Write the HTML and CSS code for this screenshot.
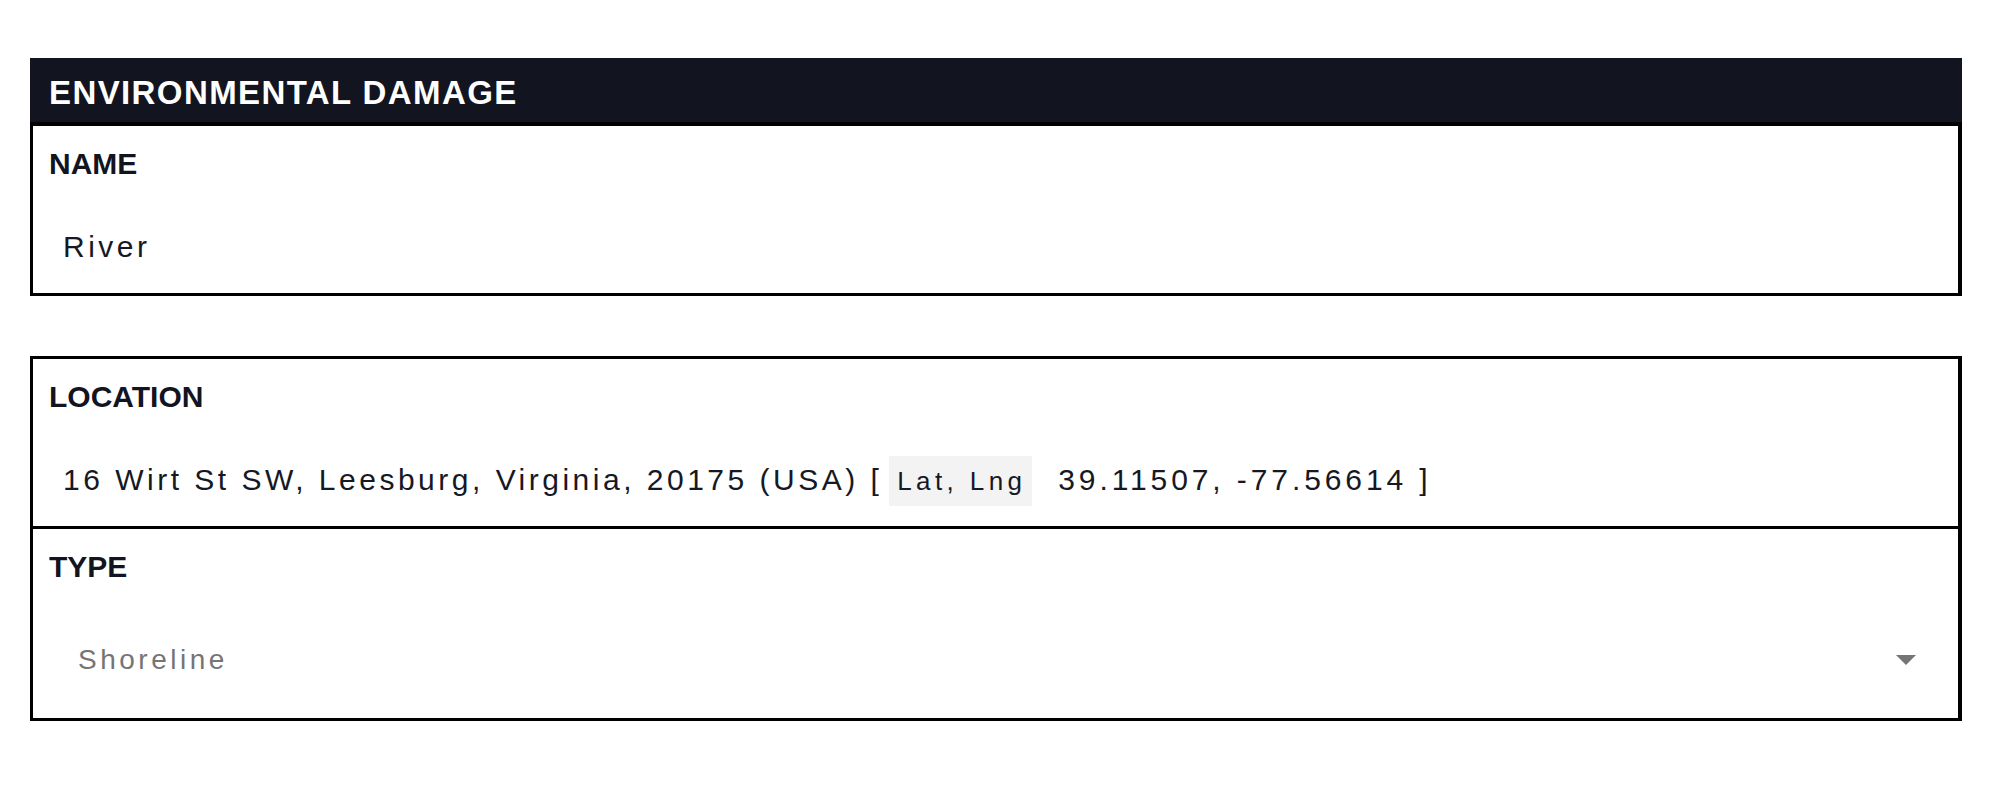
FILE: index.html
```html
<!DOCTYPE html>
<html lang="en">
<head>
<meta charset="utf-8">
<title>Environmental Damage</title>
<link rel="stylesheet" href="styles.css">
</head>
<body>
<main class="page">
  <section class="card">
    <header class="card-head">ENVIRONMENTAL DAMAGE</header>
    <div class="card-body card-body-first">
      <div class="field">
        <div class="label">NAME</div>
        <div class="value">River</div>
      </div>
    </div>
  </section>

  <section class="card">
    <div class="card-body">
      <div class="field">
        <div class="label">LOCATION</div>
        <div class="value">16 Wirt St SW, Leesburg, Virginia, 20175 (USA) [ <span class="chip">Lat, Lng</span> <span class="coords">39.11507, -77.56614 ]</span></div>
      </div>
      <div class="field field-divided">
        <div class="label">TYPE</div>
        <div class="select">
          <span class="select-text">Shoreline</span>
          <span class="select-arrow"></span>
        </div>
      </div>
    </div>
  </section>
</main>
</body>
</html>
```

FILE: styles.css
```css
html, body {
  margin: 0;
  padding: 0;
  background: #ffffff;
}

body {
  font-family: "Liberation Sans", Arial, Helvetica, sans-serif;
  color: #12141f;
}

.page {
  width: 1932px;
  padding: 58px 0 0 30px;
  display: flex;
  flex-direction: column;
  gap: 60px;
}

.card {
  display: flex;
  flex-direction: column;
}

.card-head {
  background: #12141f;
  color: #ffffff;
  height: 64px;
  box-sizing: border-box;
  padding: 6px 0 0 19px;
  font-size: 33px;
  font-weight: 700;
  letter-spacing: 1.4px;
  line-height: 58px;
  white-space: nowrap;
  overflow: hidden;
}

.card-body {
  border-style: solid;
  border-color: #000000;
  border-width: 3px 4px 3px 3px;
  background: #ffffff;
}

.card-body-first {
  border-top-width: 4px;
}

.field {
  padding: 20px 15px 21px 16px;
}

.field-divided {
  border-top: 3px solid #000000;
  padding-bottom: 28px;
}

.label {
  font-size: 30px;
  font-weight: 700;
  line-height: 36px;
  color: #12141f;
}

.value {
  margin: 40px 0 0 14px;
  font-size: 30px;
  line-height: 50px;
  height: 50px;
  letter-spacing: 3.5px;
  color: #161824;
  white-space: nowrap;
}

.coords {
  letter-spacing: 3.9px;
}

.chip {
  display: inline-block;
  vertical-align: top;
  height: 50px;
  line-height: 50px;
  margin-top: 1px;
  padding: 0 6px 0 8px;
  margin-left: -5px;
  margin-right: 14px;
  background: #f3f3f3;
  font-size: 26px;
  letter-spacing: 4.4px;
}

.select {
  margin: 45px 0 0 14px;
  height: 60px;
  padding: 0 27px 0 15px;
  display: flex;
  align-items: center;
  justify-content: space-between;
}

.select-text {
  font-size: 28px;
  letter-spacing: 3.5px;
  color: #757575;
}

.select-arrow {
  width: 0;
  height: 0;
  border-left: 10px solid transparent;
  border-right: 10px solid transparent;
  border-top: 10px solid #757575;
}
```
